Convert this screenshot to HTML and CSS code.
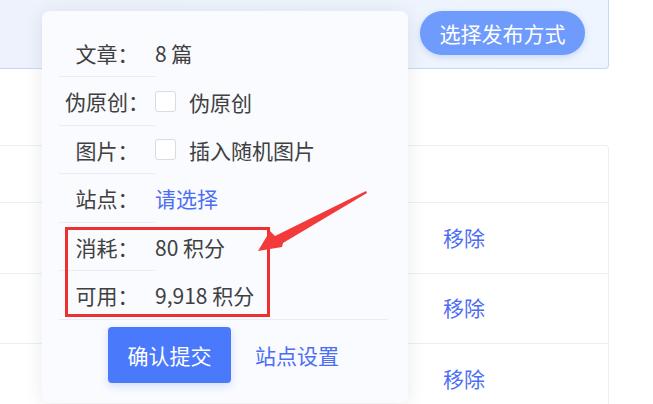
FILE: index.html
```html
<!DOCTYPE html>
<html lang="zh-CN">
<head>
    <meta charset="UTF-8">
    <meta name="viewport" content="width=device-width, initial-scale=1.0">
    <title>发布文章</title>
    <link rel="stylesheet" href="styles.css">
</head>
<body>
<div class="page">
    <div class="topbar">
        <button class="pill-btn">选择发布方式</button>
    </div>

    <div class="table">
        <div class="table-head"></div>
        <div class="table-row"><a class="link">移除</a></div>
        <div class="table-row"><a class="link">移除</a></div>
        <div class="table-row"><a class="link">移除</a></div>
    </div>

    <!-- publish popover -->
    <div class="popover">
        <div class="form-row">
            <div class="label">文章：</div>
            <div class="value">8 篇</div>
        </div>
        <div class="form-row">
            <div class="label">伪原创：</div>
            <div class="value"><span class="checkbox"></span>伪原创</div>
        </div>
        <div class="form-row">
            <div class="label">图片：</div>
            <div class="value"><span class="checkbox"></span>插入随机图片</div>
        </div>
        <div class="form-row">
            <div class="label">站点：</div>
            <div class="value"><a class="link">请选择</a></div>
        </div>
        <div class="form-row">
            <div class="label">消耗：</div>
            <div class="value">80 积分</div>
        </div>
        <div class="form-row last">
            <div class="label">可用：</div>
            <div class="value">9,918 积分</div>
        </div>
        <div class="popover-footer">
            <button class="primary-btn">确认提交</button>
            <a class="link">站点设置</a>
        </div>
        <div class="highlight-box"></div>
    </div>

    <svg class="arrow" width="653" height="404" viewBox="0 0 653 404">
        <polygon points="258,251 270,231 275,236 366,191 367,193 283,243 282,247" fill="#f23a3a"/>
    </svg>
</div>
</body>
</html>
```

FILE: styles.css
```css
:root {
    --blue: #4a79fb;
    --link: #4d6ef4;
    --text: #404040;
    --line: #e8ecf6;
}

body, html {
    margin: 0;
    padding: 0;
    background: #fff;
    font-family: "Noto Sans CJK SC", "Noto Sans", sans-serif;
    color: var(--text);
    overflow: hidden;
}

.page {
    position: relative;
    width: 653px;
    height: 404px;
}

.topbar {
    box-sizing: border-box;
    width: 609px;
    height: 69px;
    background: linear-gradient(90deg, #edf2fc, #eef5fe);
    border-bottom: 1px solid #c3d9fc;
    border-right: 1px solid #c3d9fc;
    border-bottom-right-radius: 4px;
    display: flex;
    justify-content: flex-end;
    align-items: flex-start;
    padding: 11px 23px 0 0;
}

.pill-btn {
    height: 44px;
    width: 165px;
    border: none;
    border-radius: 22px;
    background: #6e9bfc;
    color: #fff;
    font-family: inherit;
    font-size: 21px;
    box-shadow: 0 2px 6px rgba(80, 120, 220, 0.25);
    padding: 0;
}

.table {
    box-sizing: border-box;
    width: 609px;
    margin-top: 76px;
    border-top: 1px solid #ebeef6;
    border-right: 1px solid #ebeef6;
    border-top-right-radius: 4px;
}

.table-head {
    height: 56px;
    border-bottom: 1px solid #eceff7;
}

.table-row {
    box-sizing: border-box;
    height: 70.5px;
    border-bottom: 1px solid #eceff7;
    display: flex;
    align-items: center;
    padding-left: 443px;
    padding-bottom: 2px;
    font-size: 21px;
}

.link {
    color: var(--link);
    text-decoration: none;
}

.popover {
    position: absolute;
    left: 42px;
    top: 11px;
    box-sizing: border-box;
    width: 366px;
    height: 392px;
    background: #f9fbff;
    border-radius: 8px;
    box-shadow: 0 2px 18px rgba(40, 50, 80, 0.1);
    padding: 18px 20px 0 17px;
    font-size: 21px;
}

.form-row {
    display: flex;
    height: 48.4px;
}

.label {
    box-sizing: border-box;
    width: 96px;
    text-align: center;
    line-height: 48px;
    border-bottom: 1px solid var(--line);
    flex-shrink: 0;
}

.form-row.last .label {
    border-bottom: none;
}

.value {
    display: flex;
    align-items: center;
    line-height: 48px;
}

.checkbox {
    box-sizing: border-box;
    width: 21px;
    height: 21px;
    border: 1px solid #d8dbe2;
    border-radius: 3px;
    background: #fff;
    margin-right: 13px;
}

.popover-footer {
    border-top: 1px solid var(--line);
    display: flex;
    justify-content: center;
    align-items: center;
    gap: 24px;
    padding-top: 7px;
}

.primary-btn {
    width: 123px;
    height: 56px;
    border: none;
    border-radius: 4px;
    background: var(--blue);
    color: #fff;
    font-family: inherit;
    font-size: 21px;
    box-shadow: 0 3px 8px rgba(60, 100, 220, 0.2);
    padding: 0;
}

.highlight-box {
    position: absolute;
    left: 23px;
    top: 216px;
    width: 205px;
    height: 90px;
    box-sizing: border-box;
    border: 3px solid #ee3030;
}

.arrow {
    position: absolute;
    left: 0;
    top: 0;
    pointer-events: none;
}
```
